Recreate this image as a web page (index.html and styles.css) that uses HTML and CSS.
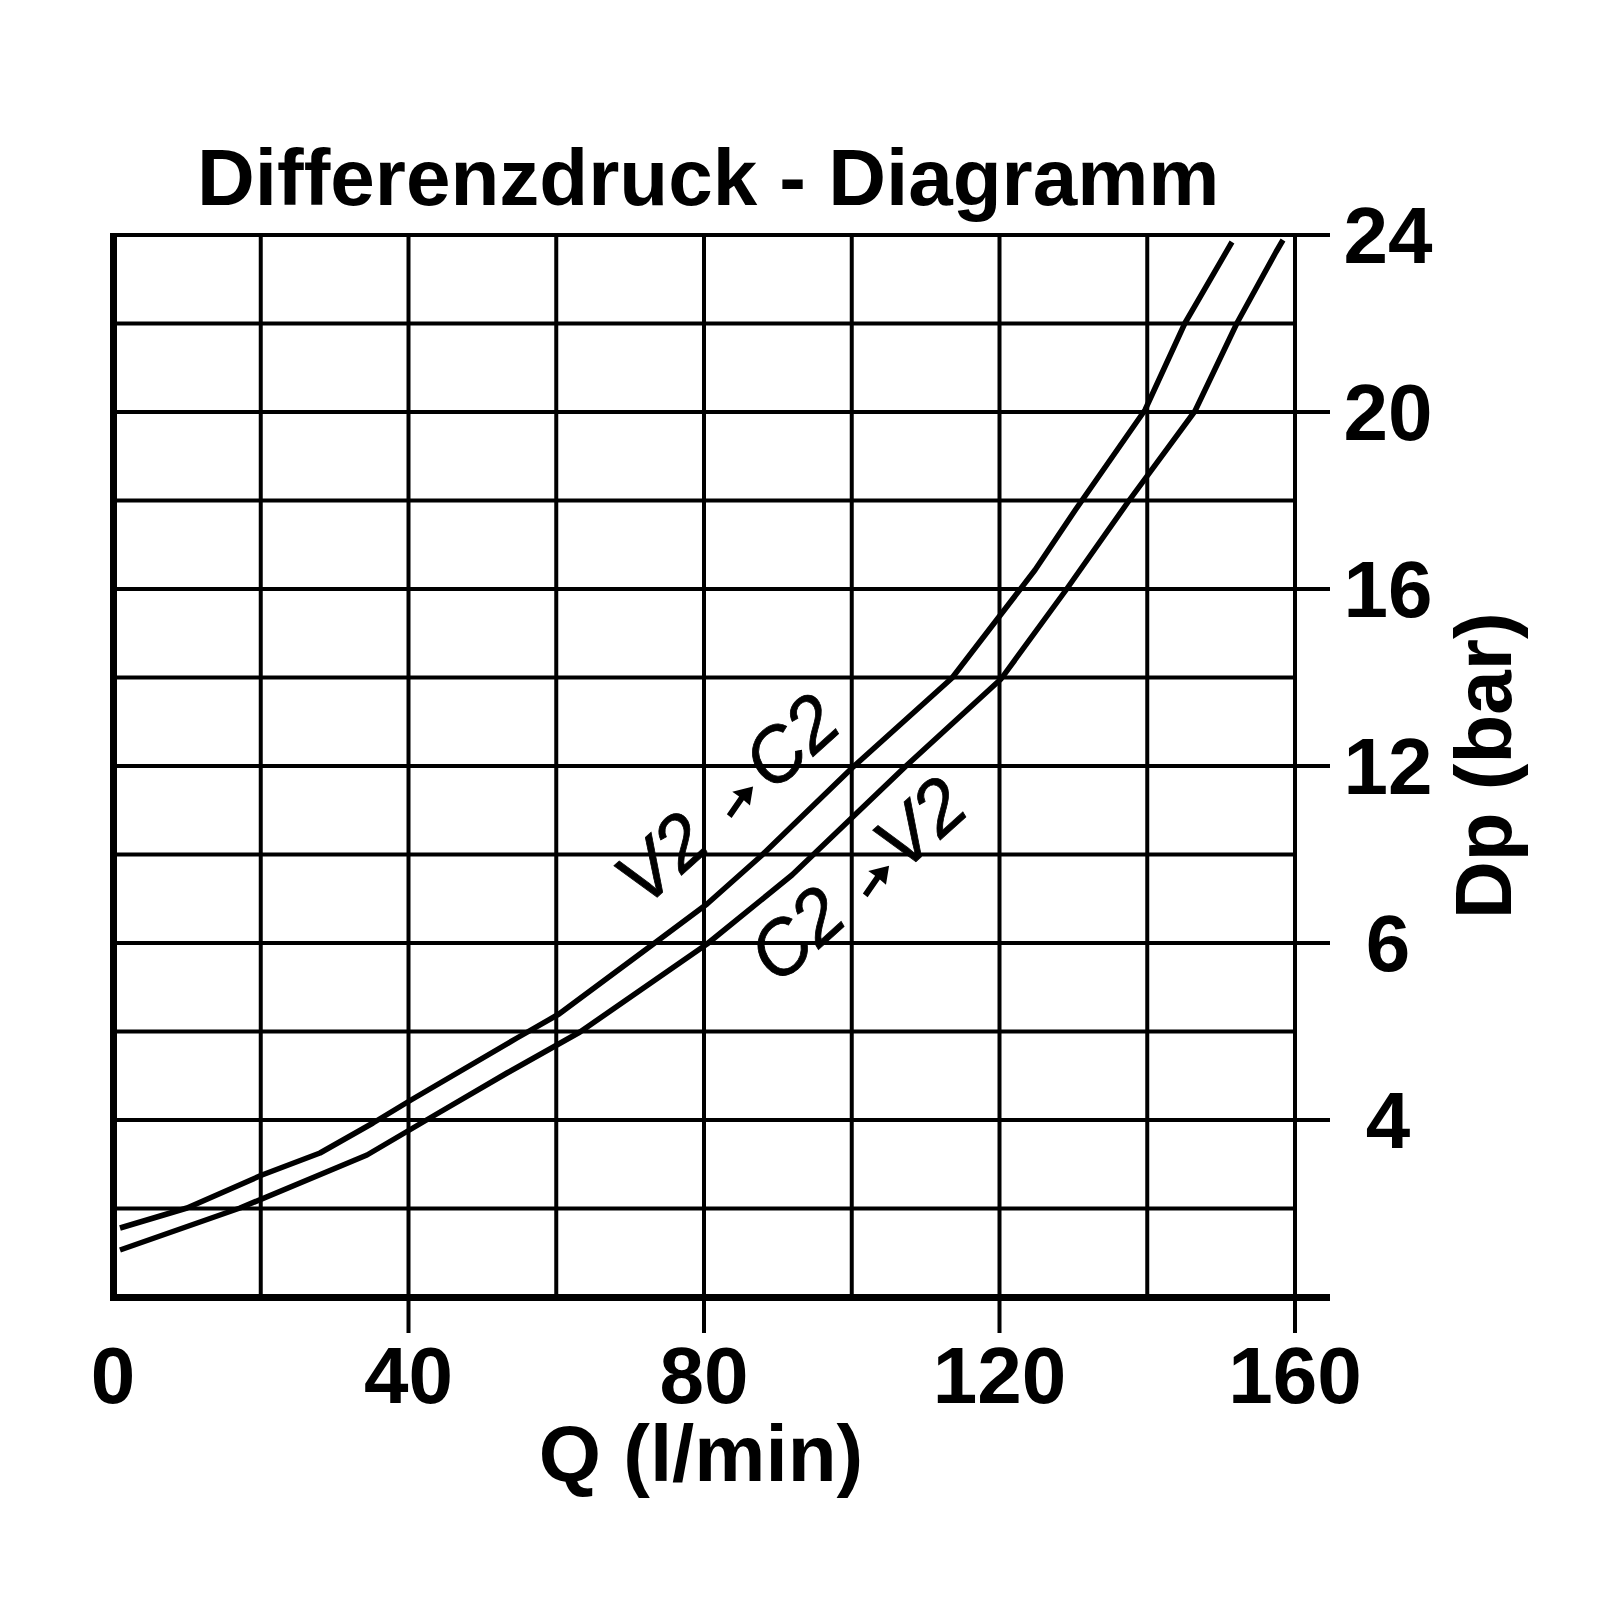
FILE: index.html
```html
<!DOCTYPE html>
<html lang="de">
<head>
<meta charset="utf-8">
<title>Differenzdruck - Diagramm</title>
<link rel="stylesheet" href="styles.css">
</head>
<body>
<main class="page">
<svg class="chart" width="1620" height="1620" viewBox="0 0 1620 1620" xmlns="http://www.w3.org/2000/svg">
  <text class="title" x="197" y="205">Differenzdruck - Diagramm</text>

  <g class="grid">
    <line x1="260.75" y1="235" x2="260.75" y2="1297"/>
    <line x1="408.5" y1="235" x2="408.5" y2="1333"/>
    <line x1="556.25" y1="235" x2="556.25" y2="1297"/>
    <line x1="704" y1="235" x2="704" y2="1333"/>
    <line x1="851.75" y1="235" x2="851.75" y2="1297"/>
    <line x1="999.5" y1="235" x2="999.5" y2="1333"/>
    <line x1="1147.25" y1="235" x2="1147.25" y2="1297"/>
    <line x1="1295" y1="235" x2="1295" y2="1333"/>

    <line x1="111" y1="235" x2="1330" y2="235"/>
    <line x1="113" y1="323.5" x2="1295" y2="323.5"/>
    <line x1="113" y1="412" x2="1330" y2="412"/>
    <line x1="113" y1="500.5" x2="1295" y2="500.5"/>
    <line x1="113" y1="589" x2="1330" y2="589"/>
    <line x1="113" y1="677.5" x2="1295" y2="677.5"/>
    <line x1="113" y1="766" x2="1330" y2="766"/>
    <line x1="113" y1="854.5" x2="1295" y2="854.5"/>
    <line x1="113" y1="943" x2="1330" y2="943"/>
    <line x1="113" y1="1031.5" x2="1295" y2="1031.5"/>
    <line x1="113" y1="1120" x2="1330" y2="1120"/>
    <line x1="113" y1="1208.5" x2="1295" y2="1208.5"/>
  </g>

  <g class="axis">
    <line x1="113.5" y1="233" x2="113.5" y2="1301"/>
    <line x1="110" y1="1297.5" x2="1330" y2="1297.5"/>
  </g>

  <g class="curve">
    <polyline points="120,1228 187,1208 262,1175 320,1153 373,1123 411,1100 517,1038 559,1014 652,945 707,904 761,856 852,768 952,678 1035,570 1076,509 1145,410 1185,323 1232,242"/>
    <polyline points="120,1250 240,1208 367,1155 435,1115 507,1073 580,1032 707,944 792,875 906,766 1001,679 1066,590 1128,502 1195,411 1237,323 1276,252 1283,240"/>
  </g>

  <g class="ylabels">
    <text x="1388" y="263">24</text>
    <text x="1388" y="440">20</text>
    <text x="1388" y="617">16</text>
    <text x="1388" y="794">12</text>
    <text x="1388" y="971">6</text>
    <text x="1388" y="1148">4</text>
  </g>

  <g class="xlabels">
    <text x="113" y="1403">0</text>
    <text x="408.5" y="1403">40</text>
    <text x="704" y="1403">80</text>
    <text x="999.5" y="1403">120</text>
    <text x="1295" y="1403">160</text>
    <text x="701" y="1481">Q (l/min)</text>
  </g>

  <text class="ytitle" transform="translate(1511,919) rotate(-90)">Dp (bar)</text>

  <g class="curvelabel" transform="translate(644,909) rotate(-42)">
    <text x="0" y="0">V2</text>
    <path class="arrow" d="M125,-15 L146,-20 L144,-28 L163,-18 L148,-6 L147,-14 L126,-9 Z"/>
    <text x="173" y="0">C2</text>
  </g>

  <g class="curvelabel" transform="translate(778,986) rotate(-42)">
    <text x="0" y="0">C2</text>
    <path class="arrow" d="M125,-12 L146,-17 L144,-25 L163,-15 L148,-3 L147,-11 L126,-6 Z"/>
    <text x="168" y="0">V2</text>
  </g>
</svg>
</main>
</body>
</html>
```

FILE: styles.css
```css
html, body {
  margin: 0;
  padding: 0;
  background: #ffffff;
}

.page {
  display: block;
  width: 1620px;
  height: 1620px;
}

.chart {
  display: block;
}

.title {
  font-family: "Liberation Sans", Arial, sans-serif;
  font-weight: 700;
  font-size: 80px;
  fill: #000;
}

.grid line {
  stroke: #000;
  stroke-width: 4;
}

.axis line {
  stroke: #000;
  stroke-width: 7;
}

.curve polyline {
  fill: none;
  stroke: #000;
  stroke-width: 5.5;
  stroke-linejoin: round;
}

.ylabels text,
.xlabels text {
  font-family: "Liberation Sans", Arial, sans-serif;
  font-weight: 700;
  font-size: 80px;
  text-anchor: middle;
  fill: #000;
}

.ytitle {
  font-family: "Liberation Sans", Arial, sans-serif;
  font-weight: 700;
  font-size: 80px;
  fill: #000;
}

.curvelabel text {
  font-family: "Liberation Sans", Arial, sans-serif;
  font-style: italic;
  font-weight: 400;
  font-size: 76px;
  fill: #000;
  stroke: #000;
  stroke-width: 0.8;
}

.arrow {
  fill: #000;
}
```
